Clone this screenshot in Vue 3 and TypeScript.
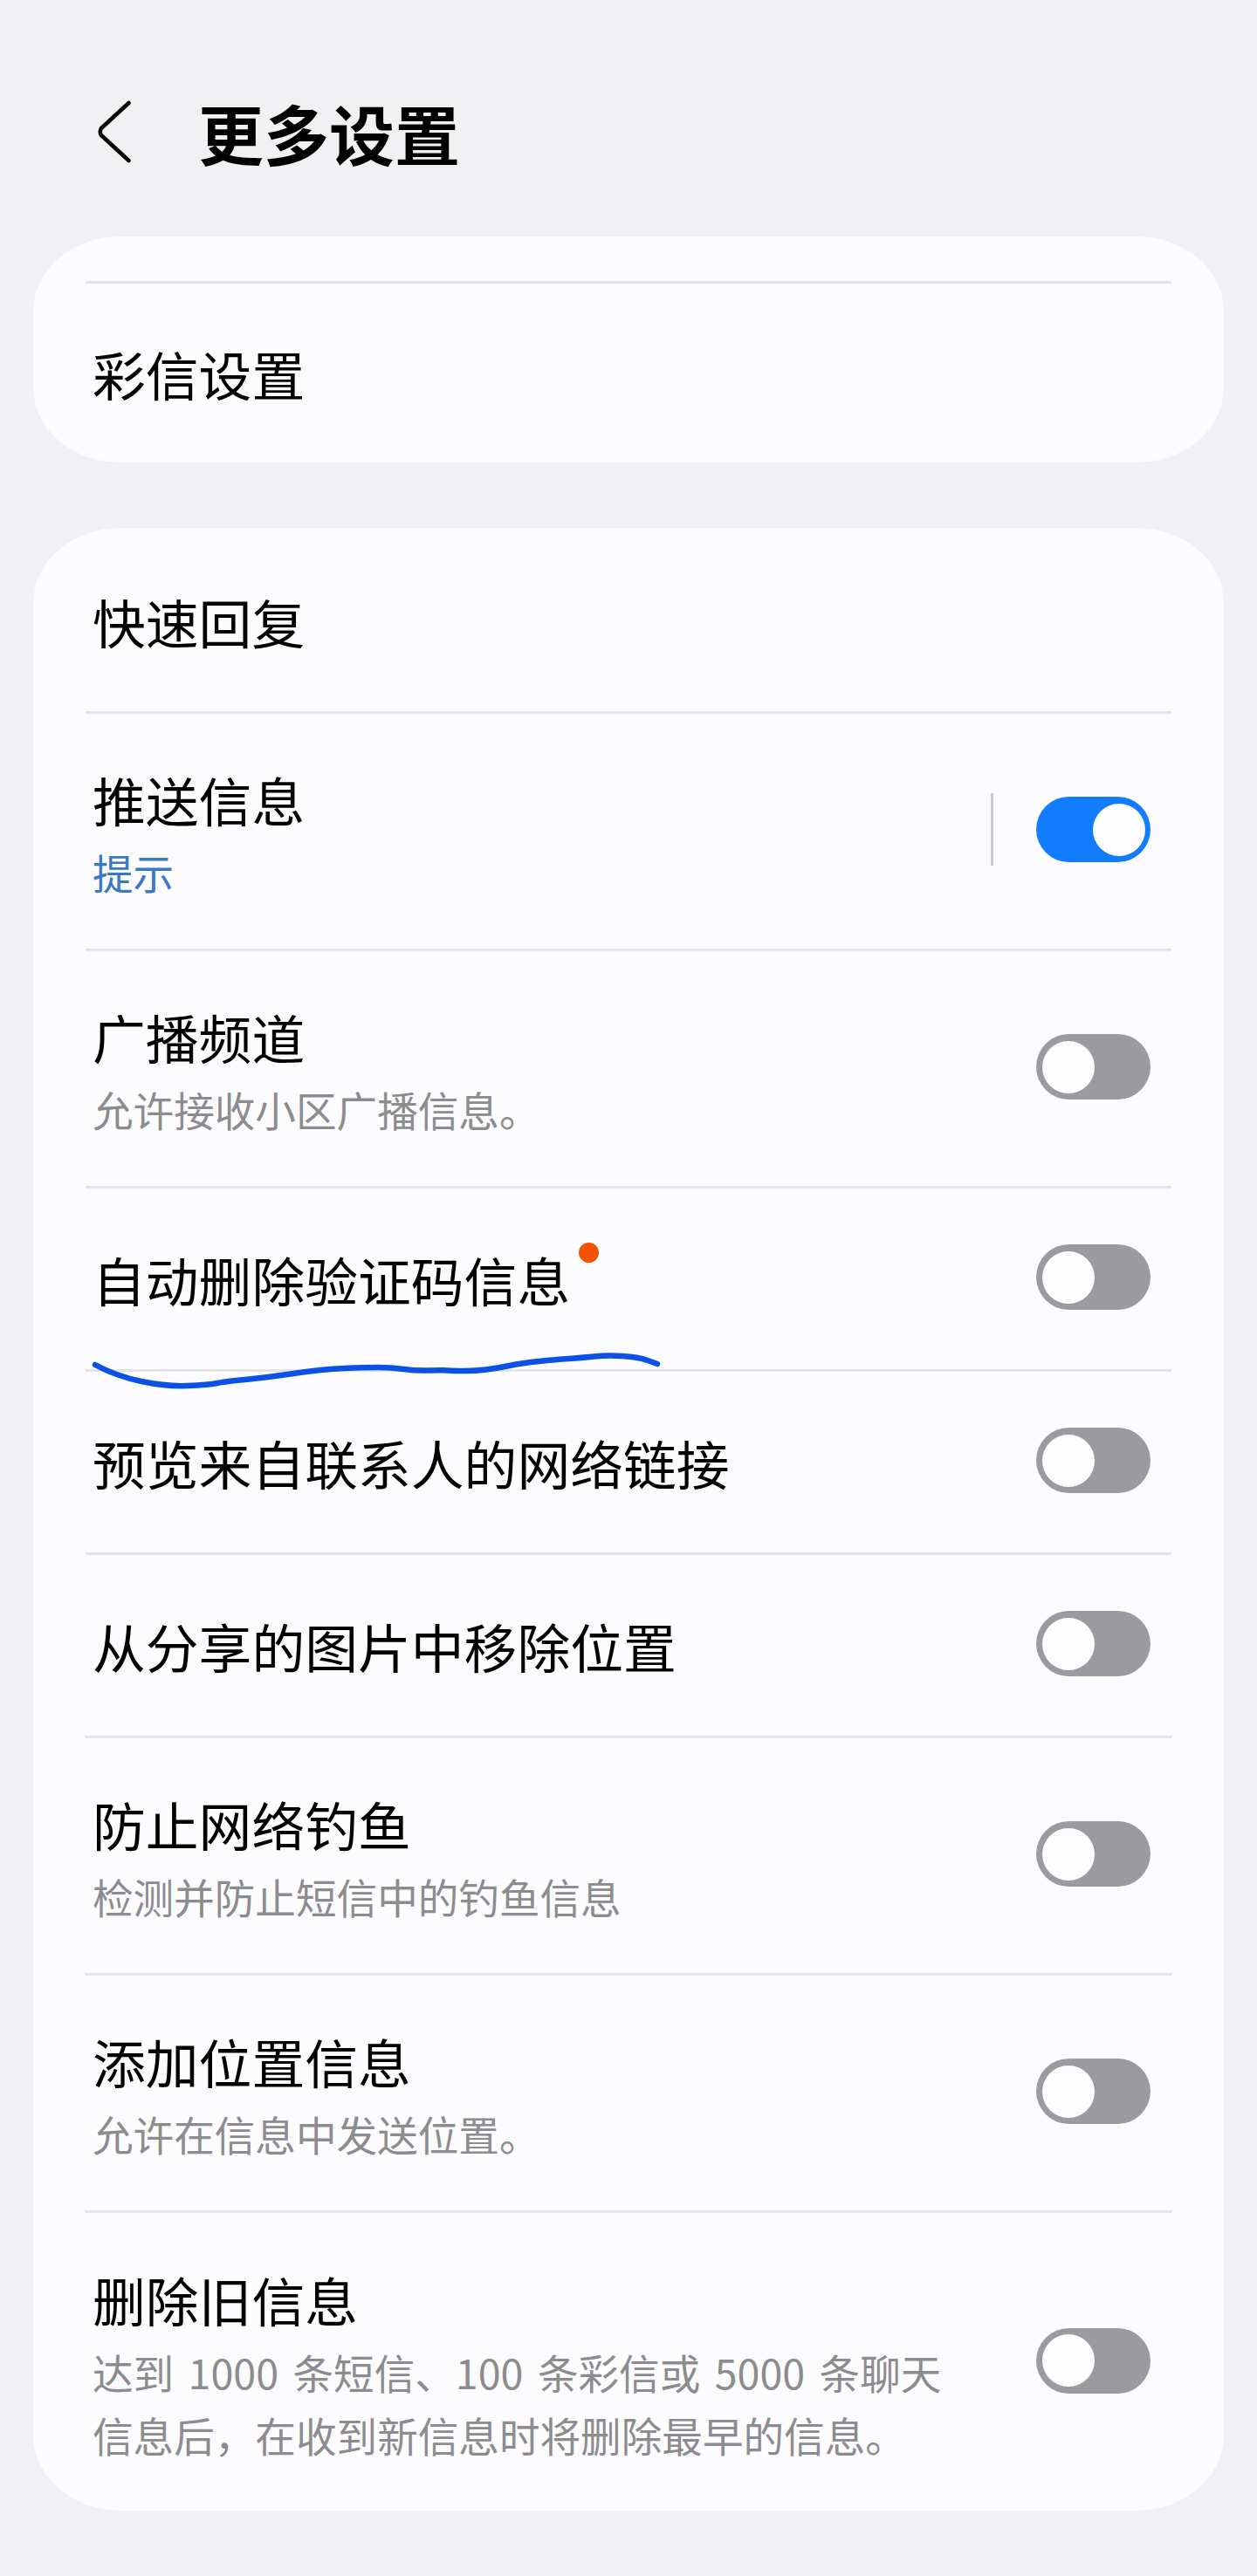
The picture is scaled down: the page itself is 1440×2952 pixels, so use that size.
<script setup lang="ts">
interface Row {
  title: string
  sub?: string
  kind: 'lead' | 'single' | 'double' | 'tall'
  blue?: boolean
  on?: boolean
  sep?: boolean
  dot?: boolean
  noToggle?: boolean
}
const rows: Row[] = [
  { title: '快速回复', kind: 'lead', noToggle: true },
  { title: '推送信息', sub: '提示', kind: 'double', blue: true, on: true, sep: true },
  { title: '广播频道', sub: '允许接收小区广播信息。', kind: 'double' },
  { title: '自动删除验证码信息', kind: 'single', dot: true },
  { title: '预览来自联系人的网络链接', kind: 'single' },
  { title: '从分享的图片中移除位置', kind: 'single' },
  { title: '防止网络钓鱼', sub: '检测并防止短信中的钓鱼信息', kind: 'double' },
  { title: '添加位置信息', sub: '允许在信息中发送位置。', kind: 'double' },
  { title: '删除旧信息', sub: '达到 1000 条短信、100 条彩信或 5000 条聊天\n信息后，在收到新信息时将删除最早的信息。', kind: 'tall' }
]

const inkPoints: [number, number][] = [
  [11, 19], [35, 32], [93, 44], [141, 42], [161, 38], [204, 34], [272, 24], [321, 22], [350, 22], [379, 26],
  [408, 25], [422, 26], [447, 26], [471, 23], [500, 17], [539, 13], [568, 11], [597, 8], [633, 10], [655, 18]
]
const inkPath = inkPoints.reduce((d, p, i, all) => {
  if (i === 0) return `M${p[0]} ${p[1]}`
  if (i === all.length - 1) return `${d} L${p[0]} ${p[1]}`
  const n = all[i + 1]
  return `${d} Q${p[0]} ${p[1]} ${(p[0] + n[0]) / 2} ${(p[1] + n[1]) / 2}`
}, '')
</script>

<template>
  <div class="page">
    <header class="head">
      <svg class="back" width="42" height="72" viewBox="0 0 42 72" fill="none">
        <path d="M37.5 3 L6 32 Q3.5 36 6 40 L37.5 69" stroke="#000" stroke-width="4.5" stroke-linecap="round" stroke-linejoin="round" />
      </svg>
      <h1 class="title">更多设置</h1>
    </header>

    <section class="card first">
      <div class="rule"></div>
      <div class="plain">彩信设置</div>
    </section>

    <section class="card second">
      <template v-for="(r, i) in rows" :key="r.title">
        <div v-if="i > 0" class="rule"></div>
        <div class="row" :class="r.kind">
          <div class="text">
            <div class="name">
              {{ r.title }}<span v-if="r.dot" class="dot"></span>
            </div>
            <div v-if="r.sub" class="sub" :class="{ blue: r.blue }">{{ r.sub }}</div>
          </div>
          <span v-if="r.sep" class="sep"></span>
          <span v-if="!r.noToggle" class="toggle" :class="{ on: r.on }"><span class="knob"></span></span>
        </div>
      </template>
      <svg class="ink" width="680" height="60" viewBox="0 0 680 60" fill="none">
        <path :d="inkPath" stroke="#0b51e6" stroke-width="6.5" stroke-linecap="round" stroke-linejoin="round" />
      </svg>
    </section>
  </div>
</template>

<style>
html, body { margin: 0; background: #f1f1f3; }
</style>

<style scoped>
.page {
  width: 1440px;
  height: 2952px;
  overflow: hidden;
  padding: 0 38px;
  box-sizing: border-box;
  background: #f1f1f3;
  font-family: "Noto Sans CJK SC", "Noto Sans", sans-serif;
  color: #000;
}
.head {
  height: 271px;
  display: flex;
  align-items: flex-start;
  padding: 116px 0 0 72px;
  box-sizing: border-box;
}
.back { display: block; margin-top: -1px; }
.title {
  margin: 0 0 0 75px;
  font-size: 75px;
  line-height: 72px;
  font-weight: 700;
}
.card {
  background: #fcfcfe;
  border-radius: 100px / 86px;
  width: 1364px;
  padding: 0 60px;
  box-sizing: border-box;
  position: relative;
}
.first { height: 259px; padding-top: 51px; }
.plain {
  font-size: 60.8px;
  line-height: 205px;
  height: 205px;
  padding-left: 8px;
}
.second {
  margin-top: 75px;
  height: 2272px;
}
.rule { height: 3px; background: #e4e4e6; }
.row {
  display: flex;
  align-items: center;
  padding: 0 24px 0 8px;
  box-sizing: border-box;
}
.lead { height: 210px; padding-top: 3px; }
.single { height: 207px; }
.double { height: 269px; padding-top: 6px; }
.tall { height: 341px; padding-top: 9px; }
.text { flex: 1; min-width: 0; }
.name {
  font-size: 60.8px;
  line-height: 78px;
  position: relative;
  width: fit-content;
}
.sub {
  font-size: 46.6px;
  line-height: 72px;
  word-spacing: 6px;
  color: #8c8c8e;
  margin-top: 8px;
  white-space: pre-line;
}
.blue { color: #3a78c2; }
.dot {
  position: absolute;
  right: -33px;
  top: -3px;
  width: 23px;
  height: 23px;
  border-radius: 50%;
  background: #f55200;
}
.sep {
  position: relative;
  width: 3px;
  height: 83px;
  background: #c9c9cb;
  margin: 0 49px 4px 0;
}
.toggle {
  width: 131px;
  height: 75px;
  border-radius: 38px;
  background: #9b9b9f;
  position: relative;
  flex: none;
  margin-bottom: 4px;
}
.double .toggle, .double .sep { top: -3px; }
.tall .toggle { top: -4px; }
.toggle.on { background: #127cff; }
.knob {
  position: absolute;
  top: 7.5px;
  left: 7px;
  width: 60px;
  height: 60px;
  border-radius: 50%;
  background: #fdfdff;
}
.on .knob { left: 64.5px; }
.ink {
  position: absolute;
  left: 60px;
  top: 940px;
}
</style>
